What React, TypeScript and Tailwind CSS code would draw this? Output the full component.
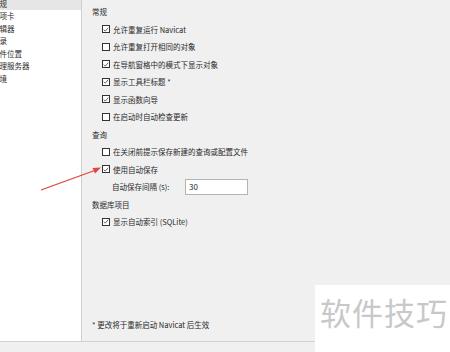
import React from "react"

type Row =
  | { kind: "header"; text: string }
  | { kind: "check"; text: string; checked: boolean }
  | { kind: "interval" }

const rows: Row[] = [
  { kind: "header", text: "常规" },
  { kind: "check", text: "允许重复运行 Navicat", checked: true },
  { kind: "check", text: "允许重复打开相同的对象", checked: false },
  { kind: "check", text: "在导航窗格中的模式下显示对象", checked: true },
  { kind: "check", text: "显示工具栏标题 *", checked: true },
  { kind: "check", text: "显示函数向导", checked: true },
  { kind: "check", text: "在启动时自动检查更新", checked: false },
  { kind: "header", text: "查询" },
  { kind: "check", text: "在关闭前提示保存新建的查询或配置文件", checked: false },
  { kind: "check", text: "使用自动保存", checked: true },
  { kind: "interval" },
  { kind: "header", text: "数据库项目" },
  { kind: "check", text: "显示自动索引 (SQLite)", checked: true },
]

const sideItems = ["常规", "选项卡", "编辑器", "记录", "文件位置", "代理服务器", "环境"]

function CheckBox({ checked }: { checked: boolean }) {
  return (
    <span className="flex h-[8px] w-[8px] items-center justify-center border border-[#333] bg-white">
      {checked && (
        <svg width="7" height="7" viewBox="0 0 8 8" className="block">
          <path d="M1 4.2 L3 6.2 L7 1.5" fill="none" stroke="#333" strokeWidth="1" />
        </svg>
      )}
    </span>
  )
}

export default function App() {
  return (
    <div
      className="relative h-[352px] w-[450px] overflow-hidden bg-[#f0f0f0] text-[7.5px] text-[#2a2a2a]"
      style={{ fontFamily: '"Noto Sans CJK SC", "Noto Sans", sans-serif' }}
    >
      <div className="flex h-[342px] border-b border-[#d2d2d2]">
        <div className="w-[82px] shrink-0 overflow-hidden border-r border-[#cfcfcf] bg-white">
          <div className="mt-[-3px]">
            {sideItems.map((item, i) => (
              <div
                key={item}
                className={`flex h-[12.5px] items-center whitespace-nowrap pl-0 ${i === 0 ? "bg-[#e6e6e6]" : ""}`}
              >
                <span className="ml-[-8px]">{item}</span>
              </div>
            ))}
          </div>
        </div>

        <div className="flex flex-1 flex-col pl-[10px] pt-[3px]">
          {rows.map((row, i) => {
            if (row.kind === "header") {
              return (
                <div key={i} className="flex h-[17.5px] items-center">
                  {row.text}
                </div>
              )
            }
            if (row.kind === "interval") {
              return (
                <div key={i} className="flex h-[17.5px] items-center pl-[20px]">
                  <span className="w-[73px]">自动保存间隔 (s):</span>
                  <span className="flex h-[16px] w-[63px] items-center border border-[#b4b4b4] bg-white pl-[3px] text-[8px]">
                    30
                  </span>
                </div>
              )
            }
            return (
              <div key={i} className="flex h-[17.5px] items-center gap-[3px] pl-[10px]">
                <CheckBox checked={row.checked} />
                <span className="whitespace-nowrap">{row.text}</span>
              </div>
            )
          })}
          <div className="mt-auto mb-[11px] pl-[-1px]">* 更改将于重新启动 Navicat 后生效</div>
        </div>
      </div>

      <svg className="absolute left-0 top-0" width="450" height="352">
        <line x1="41" y1="190" x2="96" y2="170" stroke="#e2463e" strokeWidth="1.3" />
        <path d="M101 167.5 L92.5 168 L95 173.5 Z" fill="#e2463e" />
      </svg>

      <div className="absolute left-[315px] top-[285px] flex h-[67px] w-[135px] items-start bg-white pl-[5px] pt-[10px]">
        <span className="text-[31px] leading-[34px] tracking-[1px] text-[#c8c8c8]">软件技巧</span>
      </div>
    </div>
  )
}
